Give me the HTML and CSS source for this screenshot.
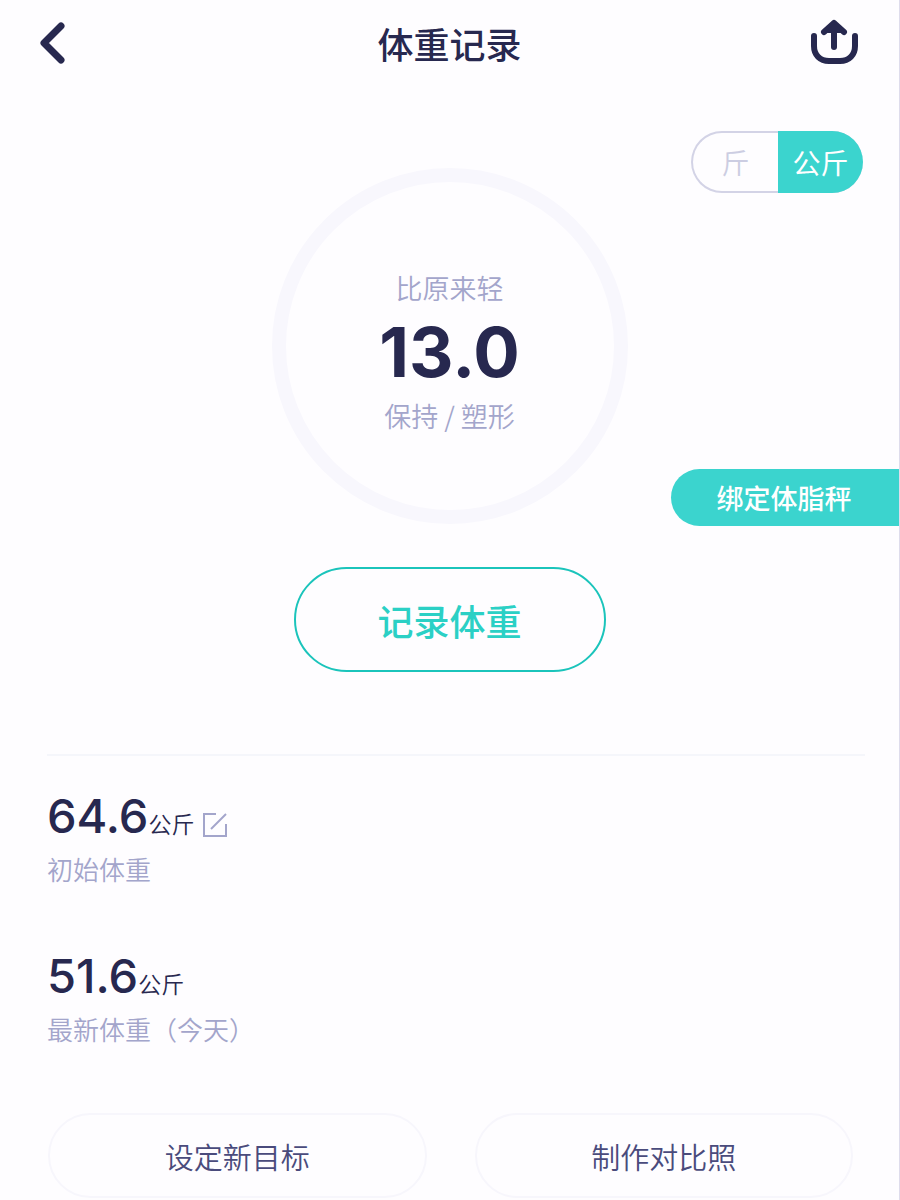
FILE: index.html
```html
<!DOCTYPE html>
<html lang="zh-CN">
<head>
    <meta charset="UTF-8">
    <meta name="viewport" content="width=device-width, initial-scale=1.0">
    <title>体重记录</title>
    <link rel="stylesheet" href="styles.css">
</head>
<body>
    <header class="header">
        <button class="icon-button" aria-label="返回">
            <svg width="28" height="44" viewBox="0 0 28 44" fill="none" stroke="currentColor" stroke-width="7" stroke-linecap="round" stroke-linejoin="round">
                <path d="M22 5 L5 22 L22 39"/>
            </svg>
        </button>
        <h1 class="header-title">体重记录</h1>
        <button class="icon-button" aria-label="分享">
            <svg width="50" height="48" viewBox="0 0 50 48" fill="none" stroke="currentColor" stroke-width="6" stroke-linecap="round" stroke-linejoin="round">
                <path d="M4 17 V27 C4 36 10 42 19 42 H30 C39 42 45 36 45 27 V17"/>
                <path d="M24 28 V8"/>
                <path d="M14 13 L24 4 L34 13"/>
                <path d="M15 14 L24 5 L33 14 Z" fill="currentColor" stroke="none"/>
            </svg>
        </button>
    </header>

    <main>
        <section class="summary">
            <div class="progress-ring">
                <p class="ring-text">比原来轻</p>
                <p class="ring-value">13.0</p>
                <p class="ring-text">保持 / 塑形</p>
            </div>
            <div class="summary-side">
                <div class="unit-switch" role="radiogroup" aria-label="单位">
                    <input type="radio" name="unit" id="unit-jin">
                    <label for="unit-jin">斤</label>
                    <input type="radio" name="unit" id="unit-kg" checked>
                    <label for="unit-kg">公斤</label>
                </div>
                <button class="bind-button">绑定体脂秤</button>
            </div>
        </section>

        <button class="record-button">记录体重</button>

        <section class="stats">
            <div class="stat">
                <div class="stat-value">
                    <span class="stat-number">64.6</span>
                    <span class="stat-unit">公斤</span>
                    <button class="edit-button" aria-label="编辑初始体重">
                        <svg width="26" height="26" viewBox="0 0 26 26" fill="none" stroke="currentColor" stroke-width="2">
                            <path d="M14 2 H2 V24 H24 V12"/>
                            <path d="M9 17 L24 2"/>
                        </svg>
                    </button>
                </div>
                <p class="stat-label">初始体重</p>
            </div>
            <div class="stat">
                <div class="stat-value">
                    <span class="stat-number">51.6</span>
                    <span class="stat-unit">公斤</span>
                </div>
                <p class="stat-label">最新体重（今天）</p>
            </div>
        </section>

        <div class="actions">
            <button class="action-button">设定新目标</button>
            <button class="action-button">制作对比照</button>
        </div>
    </main>
</body>
</html>
```
FILE: styles.css
```css
* {
    margin: 0;
    padding: 0;
    box-sizing: border-box;
}

body {
    min-height: 100vh;
    background: #fefdff;
    border-right: 1px solid #dedcec;
    color: #27284f;
    font-family: 'Noto Sans CJK SC', sans-serif;
}

button {
    border: none;
    background: none;
    color: inherit;
    font-family: inherit;
    cursor: pointer;
}

svg {
    display: block;
}

.header {
    display: flex;
    align-items: center;
    justify-content: space-between;
    height: 86px;
    padding: 0 39px;
}

.icon-button {
    flex: 1;
    display: flex;
}

.icon-button:last-child {
    justify-content: flex-end;
}

.header-title {
    font-size: 36px;
    font-weight: 500;
    line-height: 48px;
}

.summary {
    display: grid;
    grid-template-columns: 1fr auto 1fr;
    margin-top: 45px;
}

.progress-ring {
    grid-column: 2;
    display: flex;
    flex-direction: column;
    align-items: center;
    justify-content: center;
    width: 356px;
    height: 356px;
    margin: 37px 0 2px;
    padding-top: 12px;
    border: 14px solid #f8f7fd;
    border-radius: 50%;
}

.ring-text {
    color: #a3a5cb;
    font-size: 27px;
    font-weight: 350;
    line-height: 40px;
}

.ring-value {
    font-family: Inter, sans-serif;
    font-size: 69px;
    font-weight: 700;
    line-height: 88px;
}

.summary-side {
    display: flex;
    flex-direction: column;
    align-items: flex-end;
    justify-content: space-between;
}

.unit-switch {
    display: flex;
    width: 172px;
    height: 62px;
    margin-right: 36px;
    border: 2px solid #d3d3e6;
    border-right: none;
    border-radius: 31px;
}

.unit-switch input {
    appearance: none;
    width: 0;
}

.unit-switch label {
    flex: 1;
    margin: -2px 0;
    color: #cccde2;
    font-size: 28px;
    font-weight: 350;
    line-height: 62px;
    text-align: center;
    cursor: pointer;
}

.unit-switch input:checked + label {
    background: #3bd4ce;
    border-radius: 0 31px 31px 0;
    color: #fff;
    font-weight: 400;
}

.bind-button {
    width: 228px;
    height: 57px;
    padding-right: 2px;
    background: #3bd4ce;
    border-radius: 29px 0 0 29px;
    color: #fff;
    font-size: 27px;
    font-weight: 500;
}

.record-button {
    display: block;
    width: 312px;
    height: 105px;
    margin: 41px auto 82px;
    border: 2px solid #1bc4bb;
    border-radius: 53px;
    color: #2bd0c5;
    font-size: 36px;
    font-weight: 500;
}

.stats {
    margin: 0 34px 0 47px;
    padding-top: 30px;
    border-top: 2px solid #f5f6fb;
}

.stat {
    margin-bottom: 54px;
}

.stat-value {
    display: flex;
    align-items: baseline;
    height: 60px;
}

.stat-number {
    font-family: Inter, sans-serif;
    font-size: 47px;
    font-weight: 500;
    line-height: 60px;
}

.stat-unit {
    font-size: 23px;
    font-weight: 350;
}

.edit-button {
    align-self: flex-end;
    margin: 0 0 8px 8px;
    color: #a3a5cb;
}

.stat-label {
    color: #a3a5cb;
    font-size: 26px;
    font-weight: 350;
    line-height: 46px;
}

.actions {
    display: flex;
    gap: 48px;
    margin: 61px 46px 0 48px;
}

.action-button {
    flex: 1;
    height: 85px;
    border: 2px solid #f7f6fc;
    border-radius: 43px;
    color: #4a4b7c;
    font-size: 29px;
    font-weight: 350;
}
```
